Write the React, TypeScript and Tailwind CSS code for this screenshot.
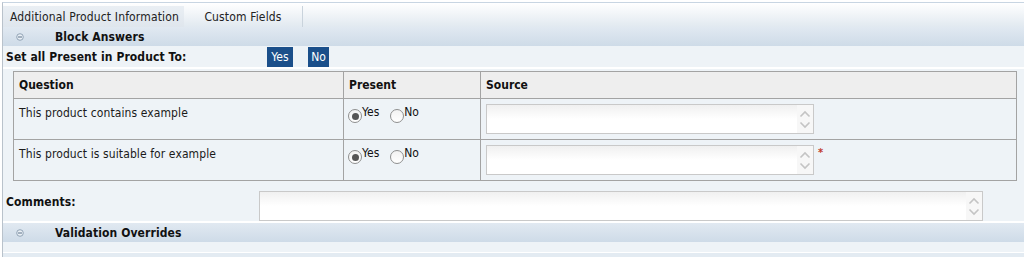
import React from "react";

const font = { fontFamily: '"DejaVu Sans Condensed", "DejaVu Sans", Verdana, sans-serif' };

function Minus() {
  return (
    <svg width="8" height="8" viewBox="0 0 8 8" className="block">
      <circle cx="4" cy="4" r="3.3" fill="#e9eff5" stroke="#8a9db0" strokeWidth="0.9" />
      <line x1="2" y1="4" x2="6" y2="4" stroke="#5d7389" strokeWidth="1" />
    </svg>
  );
}

function SectionHeader({ title }: { title: string }) {
  return (
    <div className="flex h-[19px] items-center bg-gradient-to-b from-[#e1e9f1] to-[#cedbe8]">
      <div className="ml-[13px] w-[39px]">
        <Minus />
      </div>
      <span className="text-[12px] font-bold tracking-[0.1px] text-[#111]">{title}</span>
    </div>
  );
}

function Spinner() {
  return (
    <div className="flex w-[16px] flex-col items-center justify-center gap-[3px] bg-[#f7f7f7]">
      <svg width="12" height="8" viewBox="0 0 12 8">
        <path d="M1.5 6.5 L6 2 L10.5 6.5" fill="none" stroke="#c4c4c4" strokeWidth="1.6" />
      </svg>
      <svg width="12" height="8" viewBox="0 0 12 8">
        <path d="M1.5 1.5 L6 6 L10.5 1.5" fill="none" stroke="#c4c4c4" strokeWidth="1.6" />
      </svg>
    </div>
  );
}

function TextArea({ w }: { w: string }) {
  return (
    <div className={`flex h-[30px] border border-[#c9c9c9] bg-gradient-to-b from-[#f0f0f0] via-white to-white ${w}`}>
      <div className="flex-1" />
      <Spinner />
    </div>
  );
}

function Radio({ checked, label }: { checked: boolean; label: string }) {
  return (
    <div className="flex items-start">
      <div className="mt-[4px] flex h-[14px] w-[14px] items-center justify-center rounded-full border border-[#8f8f8f] bg-gradient-to-b from-[#f2f2f2] to-white">
        {checked && <div className="h-[7px] w-[7px] rounded-full bg-[#555]" />}
      </div>
      <span className="text-[12px] leading-[14px] text-[#111]">{label}</span>
    </div>
  );
}

function Row({ q, star }: { q: string; star?: boolean }) {
  return (
    <div className="flex h-[41px] border-t border-[#a3a3a3]">
      <div className="w-[330px] border-r border-[#a3a3a3] pl-[5px] pt-[5px] text-[12px] tracking-[0.1px] text-[#1a1a1a]">{q}</div>
      <div className="flex w-[137px] gap-[11px] border-r border-[#a3a3a3] pl-[4px] pt-[6px]">
        <Radio checked label="Yes" />
        <Radio checked={false} label="No" />
      </div>
      <div className="flex flex-1 items-start pl-[5px] pt-[5px]">
        <TextArea w="w-[328px]" />
        {star && <span className="ml-[4px] mt-[2px] text-[11px] font-bold leading-none text-[#c0392b]">*</span>}
      </div>
    </div>
  );
}

export default function App() {
  return (
    <div style={font} className="h-[257px] w-[1024px] overflow-hidden bg-white pl-[2px] pt-[2px]">
      <div className="h-full border-l border-t border-l-[#b9c2cb] border-t-[#c8d5e2] bg-[#eef3f7]">
        {/* tabs */}
        <div className="flex h-[24px] items-end bg-gradient-to-b from-white to-[#e1e9f0]">
          <div className="flex h-[21px] w-[181px] items-center bg-gradient-to-b from-[#eaeff4] to-[#dfe6ed] pl-[7px] text-[12px] tracking-[0.15px] text-[#222]">
            Additional Product Information
          </div>
          <div className="flex h-[21px] w-[119px] items-center justify-center border-r border-[#c9d3dc] text-[12px] tracking-[0.15px] text-[#222]">
            Custom Fields
          </div>
        </div>
        <SectionHeader title="Block Answers" />
        <div className="flex h-[21px] items-center">
          <span className="ml-[3px] w-[261px] text-[12px] font-bold tracking-[0.1px] text-[#111]">Set all Present in Product To:</span>
          <div className="flex h-[20px] w-[26px] items-center justify-center bg-[#1b4f8a] text-[12px] text-white">Yes</div>
          <div className="ml-[15px] flex h-[20px] w-[21px] items-center justify-center bg-[#1b4f8a] text-[12px] text-white">No</div>
        </div>
        <div className="h-[2px] bg-white" />
        <div className="pl-[10px] pr-[7px] pt-[2px]">
          <div className="border border-[#a3a3a3]">
            <div className="flex h-[26px] bg-[#eeeeee] text-[12px] font-bold text-[#111]">
              <div className="flex w-[330px] items-center border-r border-[#a3a3a3] pl-[5px]">Question</div>
              <div className="flex w-[137px] items-center border-r border-[#a3a3a3] pl-[5px]">Present</div>
              <div className="flex flex-1 items-center pl-[5px]">Source</div>
            </div>
            <Row q="This product contains example" />
            <Row q="This product is suitable for example" star />
          </div>
        </div>
        <div className="flex h-[40px] items-start pt-[10px]">
          <span className="ml-[3px] mt-[2px] w-[253px] text-[12px] font-bold tracking-[0.1px] text-[#111]">Comments:</span>
          <TextArea w="w-[724px]" />
        </div>
        <div className="h-[2px] bg-white" />
        <SectionHeader title="Validation Overrides" />
        <div className="h-[10px]" />
        <div className="h-[1px] bg-white" />
        <div className="h-[4px] bg-[#e3ebf2]" />
      </div>
    </div>
  );
}
